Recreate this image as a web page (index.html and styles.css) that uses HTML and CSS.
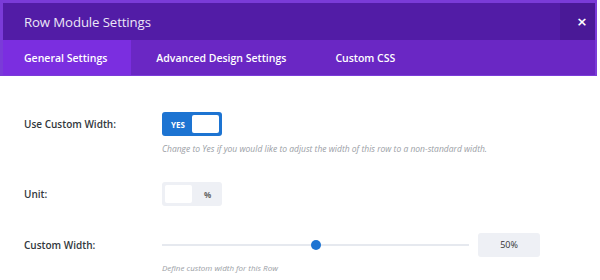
FILE: index.html
```html
<!DOCTYPE html>
<html lang="en">
<head>
    <meta charset="UTF-8">
    <title>Row Module Settings</title>
    <link rel="stylesheet" href="styles.css">
</head>
<body>
    <div class="modal">
        <div class="modal-top">
            <div class="modal-header">
                <h1>Row Module Settings</h1>
                <button class="close">&times;</button>
            </div>
            <div class="tabs">
                <div class="tab active">General Settings</div>
                <div class="tab">Advanced Design Settings</div>
                <div class="tab">Custom CSS</div>
            </div>
        </div>
        <div class="settings">
            <div class="row">
                <label class="setting-label">Use Custom Width:</label>
                <div class="setting-field">
                    <div class="toggle">
                        <span class="toggle-text">YES</span>
                        <span class="toggle-knob"></span>
                    </div>
                    <p class="description wide">Change to Yes if you would like to adjust the width of this row to a non-standard width.</p>
                </div>
            </div>
            <div class="row">
                <label class="setting-label">Unit:</label>
                <div class="setting-field">
                    <div class="unit">
                        <span class="unit-knob"></span>
                        <span class="unit-text">%</span>
                    </div>
                </div>
            </div>
            <div class="row">
                <label class="setting-label">Custom Width:</label>
                <div class="setting-field">
                    <div class="range-line">
                        <div class="track">
                            <span class="thumb" style="left: 50%"></span>
                        </div>
                        <div class="range-value">50%</div>
                    </div>
                    <p class="description">Define custom width for this Row</p>
                </div>
            </div>
        </div>
    </div>
</body>
</html>
```

FILE: styles.css
```css
body {
    margin: 0;
    padding: 0;
    background-color: #fff;
    font-family: 'Open Sans', sans-serif;
    color: #333;
}
.modal {
    width: 597px;
}
.modal-top {
    border: 3px solid #7a3bd8;
    border-right-width: 2px;
    border-bottom-width: 1px;
    background-color: #6a27c4;
}
.modal-header {
    display: flex;
    align-items: center;
    justify-content: space-between;
    height: 37px;
    background-color: #521ca6;
}
.modal-header h1 {
    margin: 0 0 0 21px;
    font-size: 13.2px;
    font-weight: 400;
    color: #ece6f7;
    letter-spacing: -0.1px;
}
.close {
    width: 35px;
    height: 37px;
    border: none;
    background-color: #4a1997;
    color: #fff;
    font-size: 13px;
    font-weight: 700;
    font-family: 'DejaVu Sans', sans-serif;
    padding: 0 0 0 9px;
}
.tabs {
    display: flex;
    height: 35px;
}
.tab {
    display: flex;
    align-items: center;
    padding: 0 24px 0 25px;
    font-size: 10.5px;
    font-weight: 600;
    color: #fff;
}
.tab.active {
    background-color: #7b2ee0;
    padding-left: 21px;
}
.settings {
    padding: 36px 0 0 24px;
}
.row {
    display: flex;
    align-items: flex-start;
    margin-bottom: 27px;
}
.row:last-child {
    margin-bottom: 0;
}
.setting-label {
    width: 138px;
    font-size: 10px;
    font-weight: 600;
    color: #32373c;
    line-height: 24px;
}
.setting-field {
    flex: 1;
}
.toggle {
    display: flex;
    align-items: center;
    justify-content: space-between;
    width: 60px;
    height: 24px;
    box-sizing: border-box;
    padding: 3px 3px 3px 9px;
    border-radius: 3px;
    background-color: #1d74d2;
}
.toggle-text {
    font-size: 8px;
    font-weight: 700;
    color: #fff;
}
.toggle-knob {
    width: 27px;
    height: 18px;
    border-radius: 2px;
    background-color: #fff;
}
.description {
    margin: 5px 0 0;
    font-size: 8px;
    line-height: 12px;
    font-style: italic;
    color: #9a9ea5;
}
.description.wide {
    margin-top: 7px;
    font-size: 8.5px;
}
.unit {
    display: flex;
    align-items: center;
    width: 60px;
    height: 24px;
    box-sizing: border-box;
    padding: 3px;
    border-radius: 3px;
    background-color: #eef0f5;
}
.unit-knob {
    width: 27px;
    height: 18px;
    border-radius: 2px;
    background-color: #fff;
}
.unit-text {
    flex: 1;
    padding-left: 4px;
    text-align: center;
    font-size: 8px;
    font-weight: 700;
    color: #666;
}
.range-line {
    display: flex;
    align-items: center;
    gap: 9px;
}
.track {
    position: relative;
    width: 307px;
    height: 2px;
    background-color: #e6e9ef;
}
.thumb {
    position: absolute;
    top: -4px;
    width: 10px;
    height: 10px;
    margin-left: -5px;
    border-radius: 50%;
    background-color: #1d74d2;
}
.range-value {
    width: 62px;
    height: 24px;
    line-height: 24px;
    border-radius: 3px;
    background-color: #eef0f5;
    text-align: center;
    font-size: 9px;
    color: #333;
}
```
